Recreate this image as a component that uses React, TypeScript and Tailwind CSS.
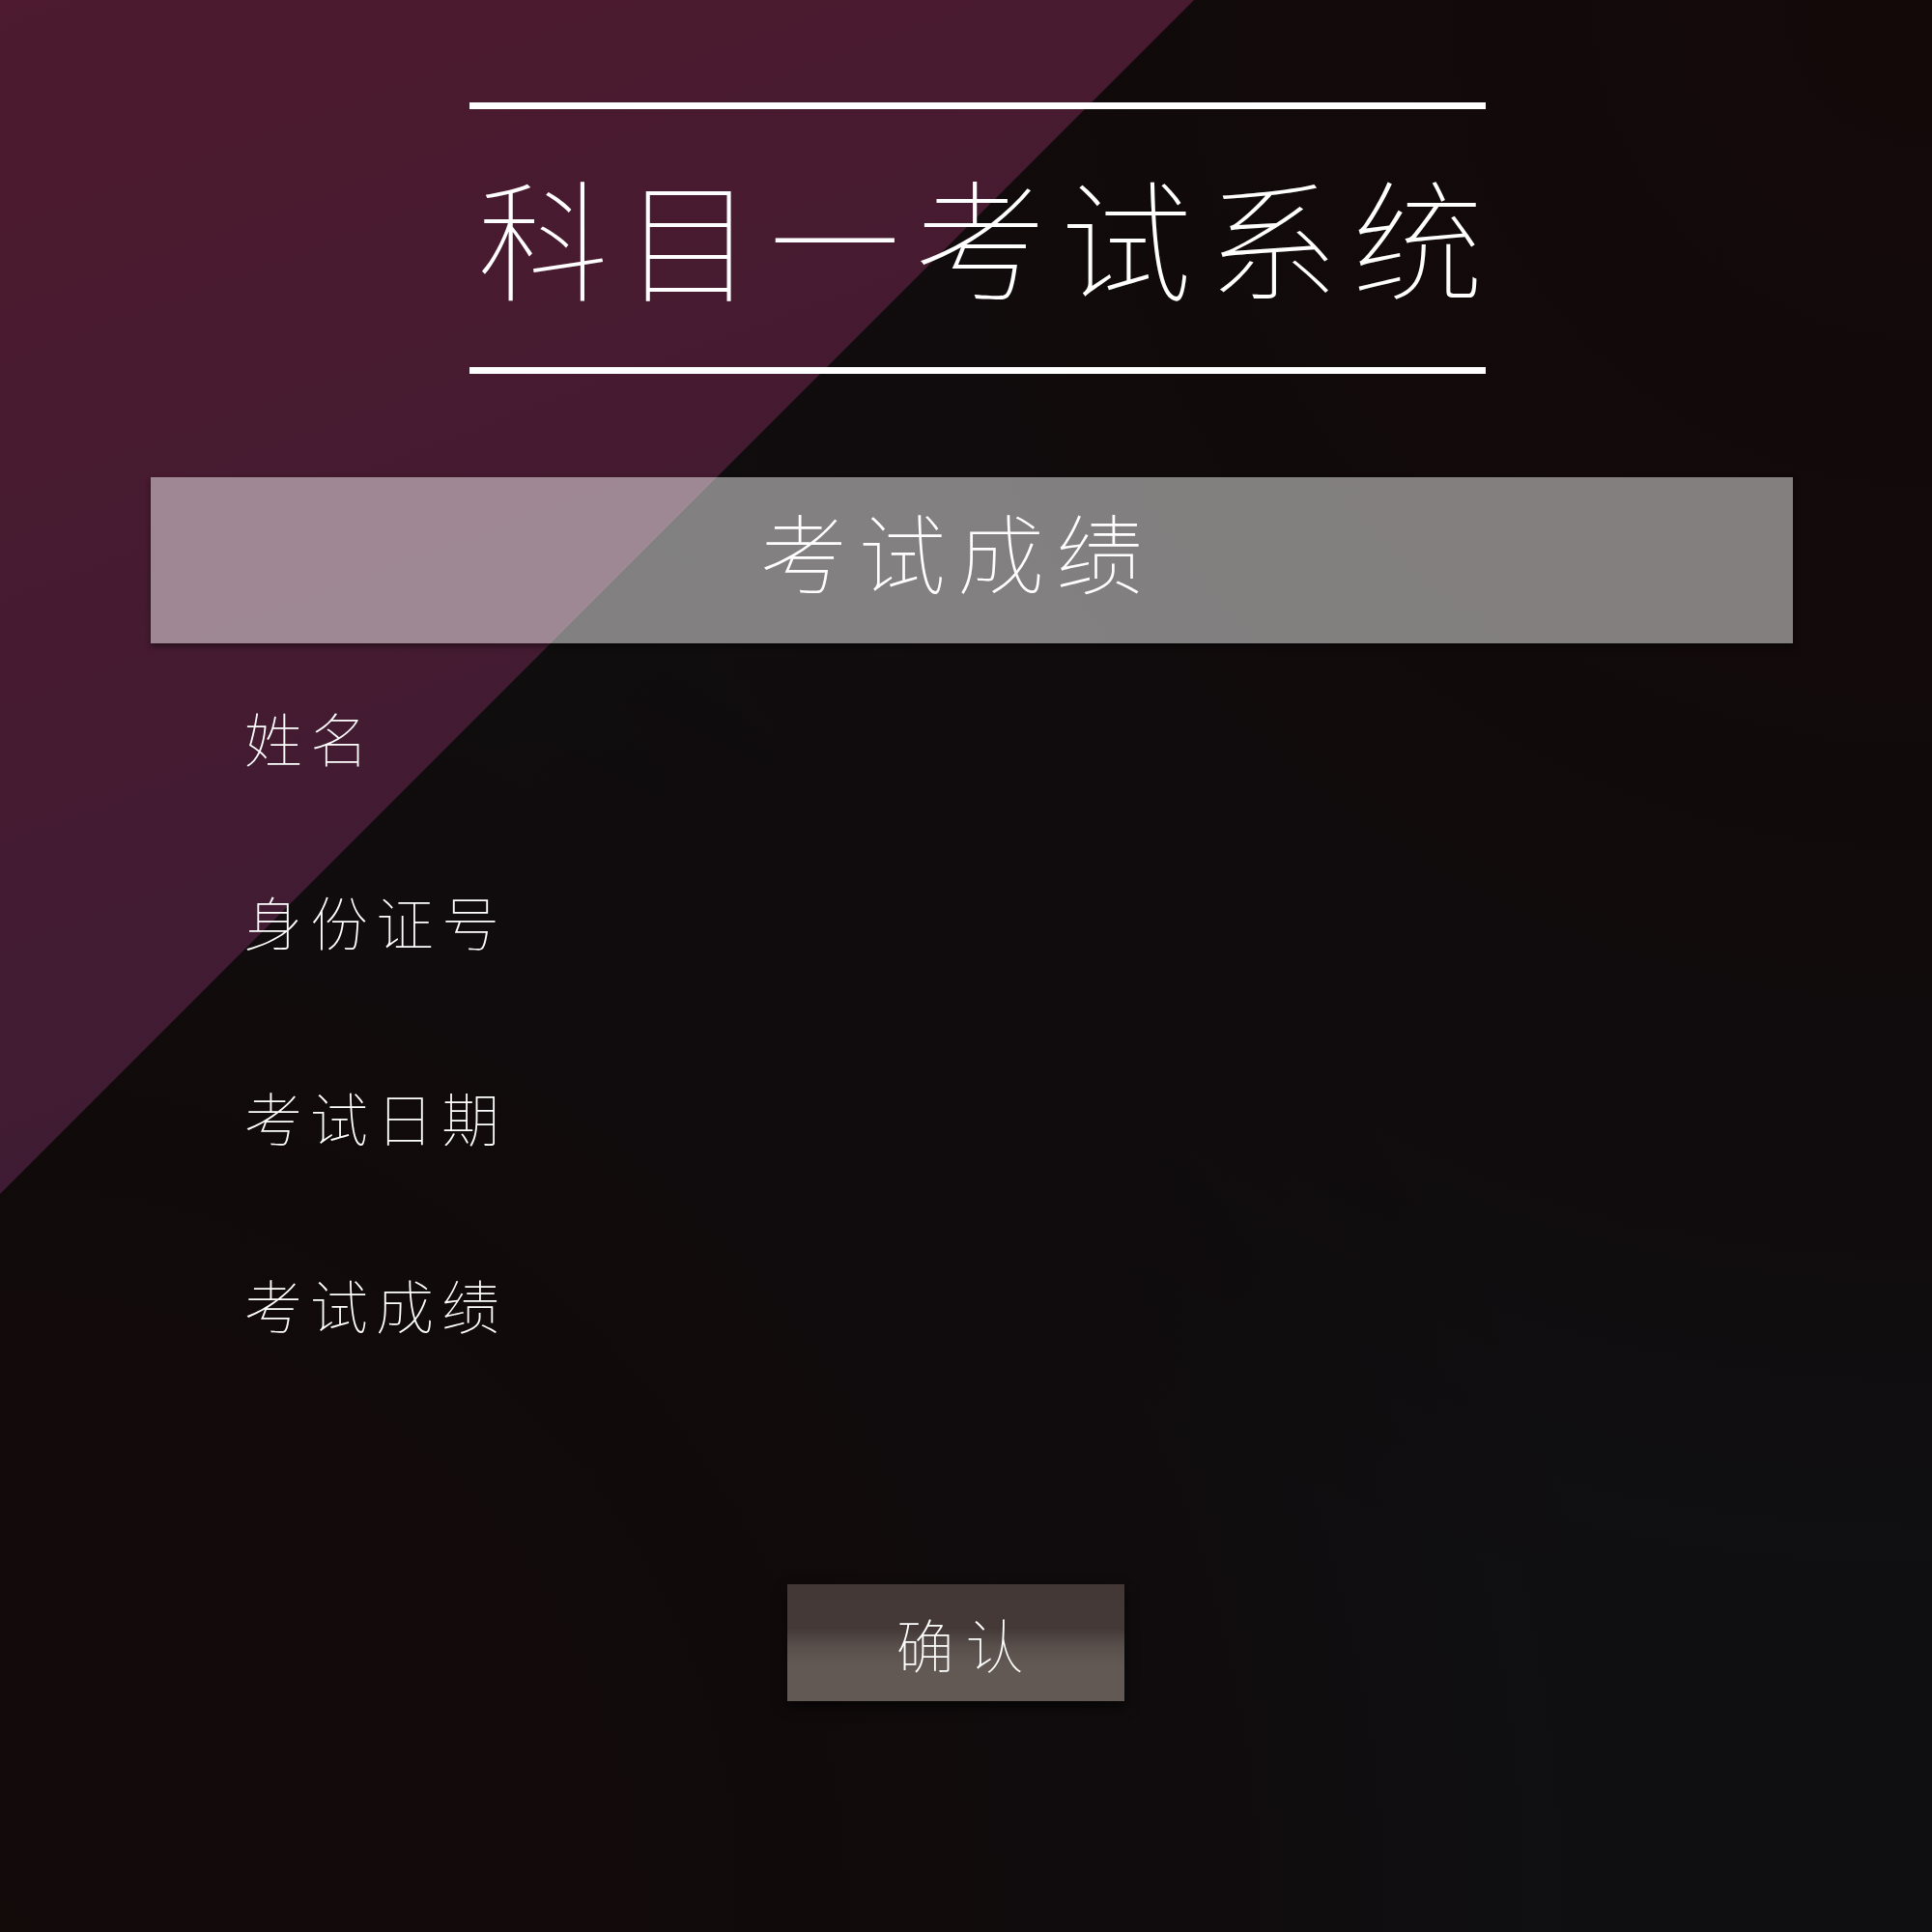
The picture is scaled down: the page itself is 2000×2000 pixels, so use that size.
export default function App() {
  const labels = [
    { text: "姓名", mt: "mt-[67px]" },
    { text: "身份证号", mt: "mt-[130px]" },
    { text: "考试日期", mt: "mt-[143px]" },
    { text: "考试成绩", mt: "mt-[134px]" },
  ];
  return (
    <div className="relative w-[2000px] h-[2000px] overflow-hidden bg-[#0f0f11] text-white font-thin [font-family:'Noto_Sans_CJK_SC','Noto_Sans',sans-serif]">
      <div className="absolute inset-0 bg-[radial-gradient(ellipse_at_top_right,#130909_0%,#110a0b_30%,transparent_60%),radial-gradient(ellipse_at_bottom_left,#130a0a_0%,#110a0b_30%,transparent_60%)]" />
      <div className="absolute inset-0 [clip-path:polygon(0_0,1236px_0,0_1236px)] bg-[linear-gradient(160deg,#4d1a2e_0%,#441b31_30%,#3d1d36_55%,#3c1f37_100%)]" />
      <div className="relative flex flex-col">
        <div className="ml-[486px] mt-[106px] w-[1052px] flex flex-col">
          <div className="h-[7px] bg-white" />
          <h1 className="mt-[62px] pl-[8px] text-[136px] tracking-[15px] leading-none text-center font-thin whitespace-nowrap">
            科目一考试系统
          </h1>
          <div className="mt-[69px] h-[7px] bg-white" />
        </div>
        <div className="ml-[156px] mt-[107px] w-[1700px] h-[172px] bg-white/[0.48] shadow-[0_3px_6px_rgba(0,0,0,0.45)] flex justify-center pr-[30px] pt-[30px]">
          <span className="text-[90px] tracking-[12px] leading-none">考试成绩</span>
        </div>
        {labels.map((l) => (
          <div key={l.text} className={`${l.mt} ml-[253px] text-[60px] tracking-[8px] leading-none`}>
            {l.text}
          </div>
        ))}
        <button className="mt-[260px] ml-[815px] w-[349px] h-[121px] flex items-center justify-center pl-[20px] bg-[linear-gradient(to_bottom,#433836_0%,#443937_38%,#5a514d_55%,#625955_70%,#625955_100%)] shadow-[0_6px_12px_rgba(0,0,0,0.6)] text-[60px] tracking-[12px] leading-none text-white font-thin">
          确认
        </button>
      </div>
    </div>
  );
}
